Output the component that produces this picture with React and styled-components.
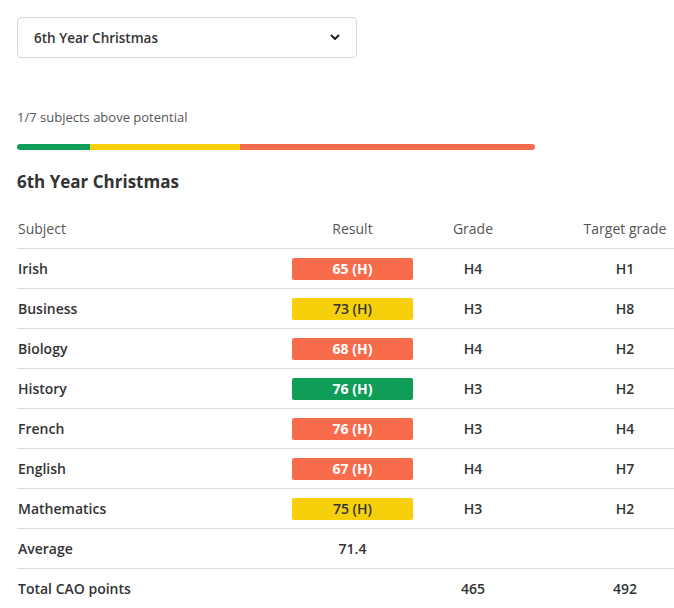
import React from "react";
import styled, { createGlobalStyle } from "styled-components";

const Global = createGlobalStyle`
  html, body { margin: 0; padding: 0; background: #fff; }
  body { font-family: "Open Sans", "Noto Sans", sans-serif; color: #333; overflow: hidden; }
  * { box-sizing: border-box; }
`;

const Page = styled.div`
  padding: 17px 0 0 17px;
  width: 674px;
`;

const Select = styled.div`
  width: 340px;
  height: 41px;
  border: 1px solid #d6d6d6;
  border-radius: 4px;
  display: flex;
  align-items: center;
  justify-content: space-between;
  padding: 0 16px 0 16px;
  font-size: 13.5px;
  font-weight: 600;
  color: #333;
`;

const Summary = styled.div`
  margin-top: 50px;
  font-size: 13px;
  color: #555;
  line-height: 18px;
`;

const Bar = styled.div`
  margin-top: 18px;
  width: 518px;
  height: 6px;
  display: flex;
  border-radius: 3px;
  overflow: hidden;
`;

const Segment = styled.div`
  flex: 0 0 ${(p) => p.$w}px;
  background: ${(p) => p.$c};
`;

const Heading = styled.h2`
  margin: 20px 0 0;
  font-size: 17px;
  font-weight: 700;
  color: #333;
  line-height: 24px;
`;

const Table = styled.div`
  margin-top: 14px;
  width: 657px;
`;

const Row = styled.div`
  display: grid;
  grid-template-columns: 275px 121px 120px 1fr;
  align-items: center;
  height: 40px;
  border-top: ${(p) => (p.$head ? "none" : "1px solid #d9d9d9")};
  font-size: 14px;
  font-weight: ${(p) => (p.$head ? 400 : 600)};
  color: ${(p) => (p.$head ? "#555" : "#333")};
`;

const Cell = styled.div`
  text-align: ${(p) => (p.$left ? "left" : "center")};
  padding-left: ${(p) => (p.$left ? "1px" : p.$pad ? `${p.$pad}px` : "0")};
  white-space: nowrap;
`;

const Badge = styled.div`
  height: 22px;
  border-radius: 2px;
  display: flex;
  align-items: center;
  justify-content: center;
  background: ${(p) => p.$c};
  color: ${(p) => (p.$dark ? "#333" : "#fff")};
  font-weight: ${(p) => (p.$dark ? 600 : 700)};
  font-size: 14px;
`;

const colors = {
  red: "#f86c4c",
  yellow: "#f5d00b",
  green: "#109d58",
};

const rows = [
  ["Irish", "65 (H)", "red", "H4", "H1"],
  ["Business", "73 (H)", "yellow", "H3", "H8"],
  ["Biology", "68 (H)", "red", "H4", "H2"],
  ["History", "76 (H)", "green", "H3", "H2"],
  ["French", "76 (H)", "red", "H3", "H4"],
  ["English", "67 (H)", "red", "H4", "H7"],
  ["Mathematics", "75 (H)", "yellow", "H3", "H2"],
];

const Chevron = () => (
  <svg width="10" height="7" viewBox="0 0 10 7">
    <path d="M1.5 1.5 L5 5 L8.5 1.5" fill="none" stroke="#222" strokeWidth="2" strokeLinecap="round" strokeLinejoin="round" />
  </svg>
);

export default function App() {
  return (
    <Page>
      <Global />
      <Select>
        <span>6th Year Christmas</span>
        <Chevron />
      </Select>
      <Summary>1/7 subjects above potential</Summary>
      <Bar>
        <Segment $w={73} $c={colors.green} />
        <Segment $w={150} $c={colors.yellow} />
        <Segment $w={295} $c={colors.red} />
      </Bar>
      <Heading>6th Year Christmas</Heading>
      <Table>
        <Row $head>
          <Cell $left>Subject</Cell>
          <Cell>Result</Cell>
          <Cell>Grade</Cell>
          <Cell $pad={43}>Target grade</Cell>
        </Row>
        {rows.map(([s, r, c, g, t]) => (
          <Row key={s}>
            <Cell $left>{s}</Cell>
            <Badge $c={colors[c]} $dark={c === "yellow"}>{r}</Badge>
            <Cell>{g}</Cell>
            <Cell $pad={43}>{t}</Cell>
          </Row>
        ))}
        <Row>
          <Cell $left>Average</Cell>
          <Cell>71.4</Cell>
          <Cell></Cell>
          <Cell $pad={43}></Cell>
        </Row>
        <Row>
          <Cell $left>Total CAO points</Cell>
          <Cell></Cell>
          <Cell>465</Cell>
          <Cell $pad={43}>492</Cell>
        </Row>
      </Table>
    </Page>
  );
}
